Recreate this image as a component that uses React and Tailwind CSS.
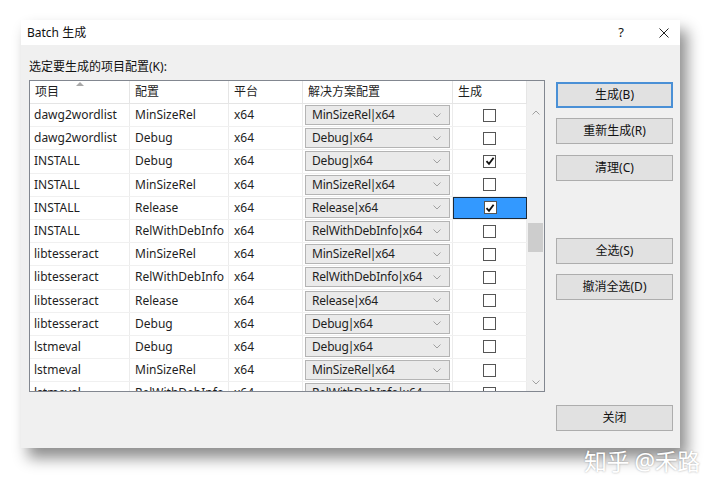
import React from 'react';

const rows = [
    ['dawg2wordlist', 'MinSizeRel', false],
    ['dawg2wordlist', 'Debug', false],
    ['INSTALL', 'Debug', true],
    ['INSTALL', 'MinSizeRel', false],
    ['INSTALL', 'Release', true, true],
    ['INSTALL', 'RelWithDebInfo', false],
    ['libtesseract', 'MinSizeRel', false],
    ['libtesseract', 'RelWithDebInfo', false],
    ['libtesseract', 'Release', false],
    ['libtesseract', 'Debug', false],
    ['lstmeval', 'Debug', false],
    ['lstmeval', 'MinSizeRel', false],
    ['lstmeval', 'RelWithDebInfo', false],
];

const Check = ({ checked }) => (
    <div className="w-[13px] h-[13px] border border-[#555] bg-white flex items-center justify-center">
        {checked && (
            <svg width="10" height="10" viewBox="0 0 10 10">
                <path d="M1.5 5.2 L4 7.8 L8.6 1.8" fill="none" stroke="#111" strokeWidth="1.8" />
            </svg>
        )}
    </div>
);

const Chevron = ({ up }) => (
    <svg width="8" height="5" viewBox="0 0 8 5">
        <path d={up ? 'M0.5 4.5 L4 1 L7.5 4.5' : 'M0.5 0.5 L4 4 L7.5 0.5'} fill="none" stroke="#a0a0a0" strokeWidth="1" />
    </svg>
);

const Btn = ({ children, primary, className = '' }) => (
    <div
        className={`h-[26px] w-[117px] flex items-center justify-center bg-[#e1e1e1] text-[12px] text-[#111] ${
            primary ? 'border-2 border-[#4a90d6]' : 'border border-[#adadad]'
        } ${className}`}
    >
        {children}
    </div>
);

export default function App() {
    return (
        <div
            className="w-[720px] h-[489px] bg-white relative overflow-hidden pl-[21px] pt-[20px]"
            style={{ fontFamily: '"Noto Sans", "Noto Sans CJK SC", sans-serif' }}
        >
            <div className="w-[659px] h-[428px] flex flex-col shadow-[7px_10px_14px_rgba(0,0,0,0.45)]">
                {/* title bar */}
                <div className="h-[25px] bg-white flex items-center pl-[6px] pr-[11px] text-[12px] text-[#111]">
                    <span>Batch 生成</span>
                    <span className="ml-auto mr-[35px] text-[13px]">?</span>
                    <svg width="10" height="10" viewBox="0 0 10 10">
                        <path d="M0.5 0.5 L9.5 9.5 M9.5 0.5 L0.5 9.5" stroke="#222" strokeWidth="1" />
                    </svg>
                </div>

                <div className="flex-1 bg-[#f0f0f0] pl-[8px] pr-[7px] pt-[14px] flex flex-col">
                    <div className="h-[16px] leading-[16px] text-[12px] text-[#111]">选定要生成的项目配置(K):</div>

                    <div className="mt-[5px] flex items-start gap-[11px]">
                        {/* list */}
                        <div className="w-[516px] h-[312px] border border-[#828790] bg-white flex overflow-hidden">
                            <div className="w-[497px] flex flex-col overflow-hidden text-[12px] text-[#1e1e1e]">
                                <div className="h-[23px] shrink-0 flex border-b border-[#e5e5e5]">
                                    <div className="w-[100px] border-r border-[#e5e5e5] pl-[5px] flex items-center relative">
                                        项目
                                        <svg className="absolute left-[46px] top-[1px]" width="8" height="4" viewBox="0 0 8 4">
                                            <path d="M0 4 L4 0 L8 4 Z" fill="#a8a8a8" />
                                        </svg>
                                    </div>
                                    <div className="w-[99px] border-r border-[#e5e5e5] pl-[5px] flex items-center">配置</div>
                                    <div className="w-[74px] border-r border-[#e5e5e5] pl-[5px] flex items-center">平台</div>
                                    <div className="w-[150px] border-r border-[#e5e5e5] pl-[5px] flex items-center">解决方案配置</div>
                                    <div className="w-[74px] border-r border-[#e5e5e5] pl-[5px] flex items-center">生成</div>
                                </div>
                                {rows.map(([proj, cfg, checked, selected], i) => (
                                    <div key={i} className="h-[23.2px] shrink-0 flex border-b border-[#f0f0f0]">
                                        <div className="w-[100px] border-r border-[#ececec] pl-[4px] flex items-center">{proj}</div>
                                        <div className="w-[99px] border-r border-[#ececec] pl-[5px] flex items-center">{cfg}</div>
                                        <div className="w-[74px] border-r border-[#ececec] pl-[5px] flex items-center">x64</div>
                                        <div className="w-[150px] border-r border-[#ececec] px-[2px] flex items-center">
                                            <div className="w-full h-[20px] border border-[#b4b4b4] bg-[#eaeaea] flex items-center pl-[6px] pr-[8px]">
                                                <span className="tracking-[-0.2px]">
                                                    {cfg}
                                                    <span className="mx-[-1px]">|</span>x64
                                                </span>
                                                <span className="ml-auto">
                                                    <Chevron />
                                                </span>
                                            </div>
                                        </div>
                                        <div
                                            className={`w-[74px] flex items-center justify-center ${
                                                selected ? 'bg-[#3399ff] border border-[#1b2a3a]' : 'border-r border-[#ececec]'
                                            }`}
                                        >
                                            <Check checked={checked} />
                                        </div>
                                    </div>
                                ))}
                            </div>
                            {/* scrollbar */}
                            <div className="w-[17px] bg-[#f0f0f0] flex flex-col">
                                <div className="h-[23px] shrink-0" />
                                <div className="h-[17px] shrink-0 flex items-center justify-center">
                                    <Chevron up />
                                </div>
                                <div className="flex-1">
                                    <div className="mt-[102px] h-[29px] mx-[1px] bg-[#cdcdcd]" />
                                </div>
                                <div className="h-[17px] shrink-0 flex items-center justify-center">
                                    <Chevron />
                                </div>
                            </div>
                        </div>

                        {/* buttons */}
                        <div className="mt-[2px] flex flex-col">
                            <Btn primary>生成(B)</Btn>
                            <Btn className="mt-[10px]">重新生成(R)</Btn>
                            <Btn className="mt-[11px]">清理(C)</Btn>
                            <Btn className="mt-[57px]">全选(S)</Btn>
                            <Btn className="mt-[10px]">撤消全选(D)</Btn>
                        </div>
                    </div>

                    <div className="mt-[13px] flex justify-end">
                        <Btn>关闭</Btn>
                    </div>
                </div>
            </div>

            <div
                className="absolute left-[584px] top-[444px] text-[23px] text-white tracking-[-0.5px]"
                style={{ textShadow: '0 0 2px rgba(0,0,0,0.35)' }}
            >
                知乎 @禾路
            </div>
        </div>
    );
}
